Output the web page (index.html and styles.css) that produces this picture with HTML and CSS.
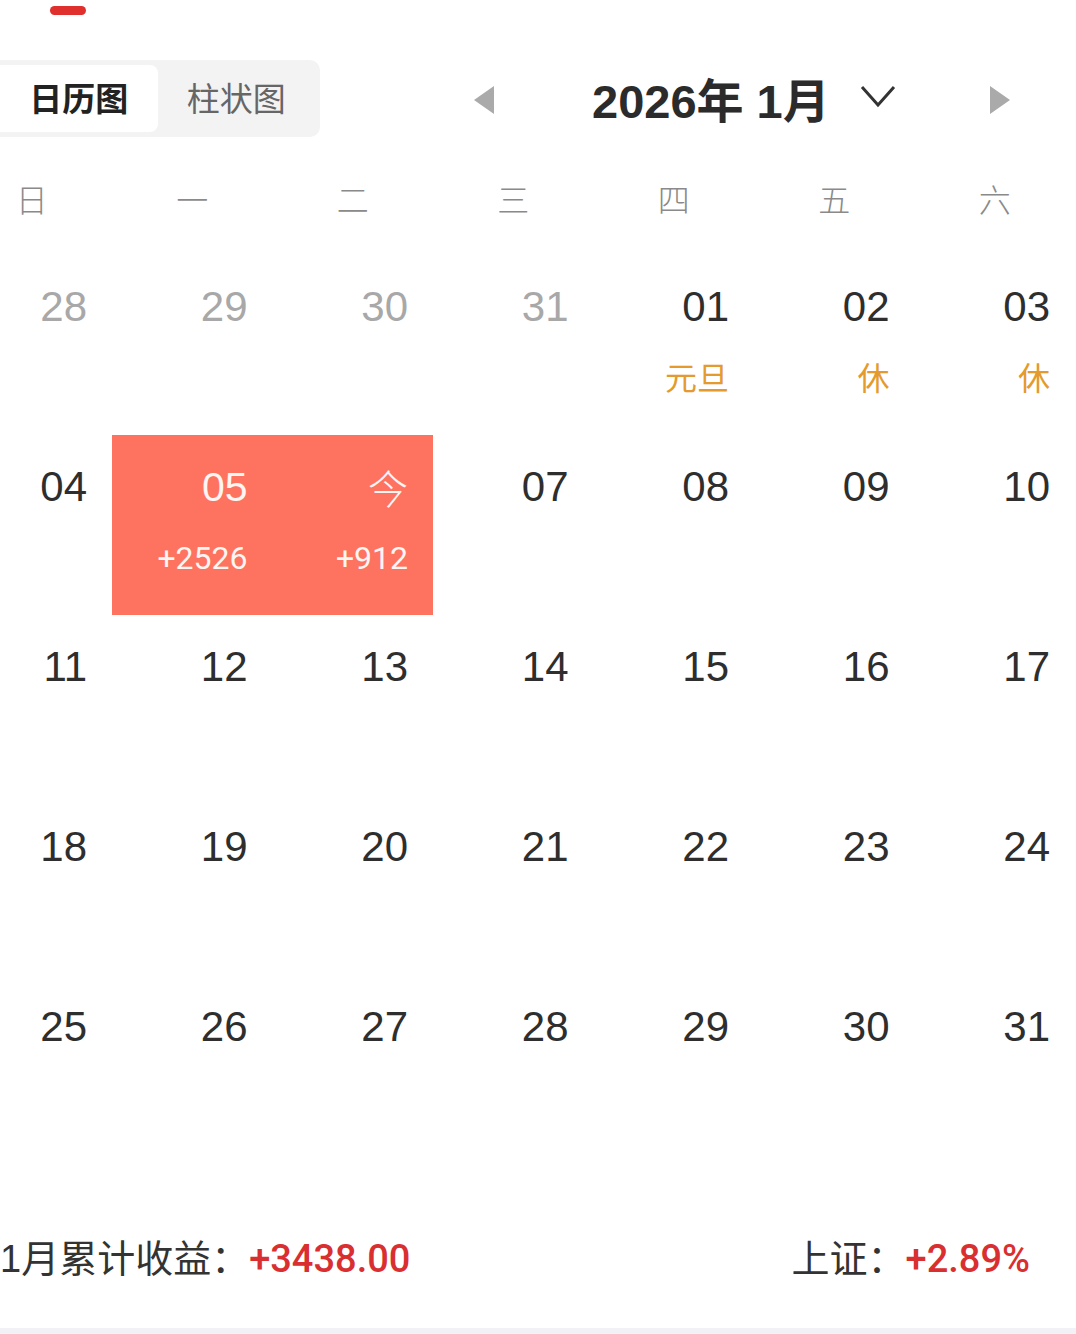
FILE: index.html
```html
<!DOCTYPE html>
<html lang="zh">
<head>
<meta charset="utf-8">
<title>日历图</title>
<link rel="stylesheet" href="styles.css">
</head>
<body>
<div class="page">
  <div class="topbar"><span class="indicator"></span></div>
  <div class="header">
    <div class="tabs">
      <div class="tab active">日历图</div>
      <div class="tab">柱状图</div>
    </div>
    <svg class="arrow arrow-left" width="20" height="28" viewBox="0 0 20 28"><polygon points="20,0 20,28 0,14" fill="#aaaaaa"/></svg>
    <div class="title">2026年 1月</div>
    <svg class="chevron" width="36" height="24" viewBox="0 0 36 24"><polyline points="2,3 18,21 34,3" fill="none" stroke="#333" stroke-width="3"/></svg>
    <svg class="arrow arrow-right" width="20" height="28" viewBox="0 0 20 28"><polygon points="0,0 0,28 20,14" fill="#aaaaaa"/></svg>
  </div>

  <div class="weekdays">
    <div>日</div><div>一</div><div>二</div><div>三</div><div>四</div><div>五</div><div>六</div>
  </div>

  <div class="grid">
    <div class="cell muted"><div class="num">28</div></div>
    <div class="cell muted"><div class="num">29</div></div>
    <div class="cell muted"><div class="num">30</div></div>
    <div class="cell muted"><div class="num">31</div></div>
    <div class="cell"><div class="num">01</div><div class="label holiday">元旦</div></div>
    <div class="cell"><div class="num">02</div><div class="label holiday">休</div></div>
    <div class="cell"><div class="num">03</div><div class="label holiday">休</div></div>

    <div class="cell"><div class="num">04</div></div>
    <div class="cell hot"><div class="num">05</div><div class="label gain">+2526</div></div>
    <div class="cell hot"><div class="num today">今</div><div class="label gain">+912</div></div>
    <div class="cell"><div class="num">07</div></div>
    <div class="cell"><div class="num">08</div></div>
    <div class="cell"><div class="num">09</div></div>
    <div class="cell"><div class="num">10</div></div>

    <div class="cell"><div class="num">11</div></div>
    <div class="cell"><div class="num">12</div></div>
    <div class="cell"><div class="num">13</div></div>
    <div class="cell"><div class="num">14</div></div>
    <div class="cell"><div class="num">15</div></div>
    <div class="cell"><div class="num">16</div></div>
    <div class="cell"><div class="num">17</div></div>

    <div class="cell"><div class="num">18</div></div>
    <div class="cell"><div class="num">19</div></div>
    <div class="cell"><div class="num">20</div></div>
    <div class="cell"><div class="num">21</div></div>
    <div class="cell"><div class="num">22</div></div>
    <div class="cell"><div class="num">23</div></div>
    <div class="cell"><div class="num">24</div></div>

    <div class="cell"><div class="num">25</div></div>
    <div class="cell"><div class="num">26</div></div>
    <div class="cell"><div class="num">27</div></div>
    <div class="cell"><div class="num">28</div></div>
    <div class="cell"><div class="num">29</div></div>
    <div class="cell"><div class="num">30</div></div>
    <div class="cell"><div class="num">31</div></div>
  </div>

  <div class="footer">
    <div class="stat">1月累计收益：<span class="red">+3438.00</span></div>
    <div class="stat">上证：<span class="red">+2.89%</span></div>
  </div>
  <div class="bottom-band"></div>
</div>
</body>
</html>
```

FILE: styles.css
```css
html, body {
  margin: 0;
  padding: 0;
  background: #ffffff;
}
body {
  width: 1076px;
  height: 1334px;
  overflow: hidden;
  font-family: "Liberation Sans", "Noto Sans CJK SC", sans-serif;
  color: #333333;
}
.page {
  width: 1076px;
}
.topbar {
  height: 60px;
  box-sizing: border-box;
  padding-top: 6px;
  padding-left: 50px;
}
.indicator {
  display: block;
  width: 36px;
  height: 9px;
  border-radius: 5px;
  background: #e0302e;
}
.header {
  height: 77px;
  display: flex;
  align-items: center;
}
.tabs {
  width: 320px;
  height: 77px;
  box-sizing: border-box;
  padding: 5px 5px 5px 0;
  background: #f3f3f3;
  border-radius: 0 10px 10px 0;
  display: flex;
}
.tab {
  width: 158px;
  height: 67px;
  display: flex;
  align-items: center;
  justify-content: center;
  font-size: 33px;
  line-height: 40px;
  padding-bottom: 4px;
  box-sizing: border-box;
  color: #666666;
  font-family: "Noto Sans CJK SC", sans-serif;
}
.tab.active {
  background: #ffffff;
  border-radius: 0 8px 8px 0;
  color: #222222;
  font-weight: 700;
}
.arrow-left {
  margin-left: 154px;
  margin-top: 2px;
}
.title {
  margin-left: 98px;
  font-size: 47px;
  font-weight: 700;
  color: #2b2b2b;
  line-height: 56px;
  margin-top: 6px;
  white-space: nowrap;
}
.chevron {
  margin-left: 30px;
  margin-top: -6px;
}
.arrow-right {
  margin-left: 94px;
  margin-top: 2px;
}
.weekdays {
  margin-left: -48.5px;
  width: 1123.5px;
  height: 118px;
  box-sizing: border-box;
  padding-top: 41px;
  display: grid;
  grid-template-columns: repeat(7, 1fr);
  font-family: "Noto Sans CJK SC", sans-serif;
  font-size: 32px;
  font-weight: 300;
  line-height: 40px;
  color: #8a8a8a;
  text-align: center;
}
.grid {
  margin-left: -48.5px;
  width: 1123.5px;
  display: grid;
  grid-template-columns: repeat(7, 1fr);
  grid-auto-rows: 180px;
}
.cell {
  box-sizing: border-box;
  padding: 27px 25px 0 0;
  text-align: right;
}
.num {
  font-size: 42px;
  line-height: 50px;
  color: #2e2e2e;
}
.muted .num {
  color: #a8a8a8;
}
.label {
  margin-top: 24px;
  line-height: 40px;
  font-size: 32px;
}
.holiday {
  font-family: "Noto Sans CJK SC", sans-serif;
  color: #e49a2c;
}
.hot {
  background: #fe7360;
}
.hot .num {
  color: #fff5f2;
  font-size: 41px;
}
.hot .today {
  font-family: "Noto Sans CJK SC", sans-serif;
  font-size: 40px;
  font-weight: 300;
}
.gain {
  margin-top: 26px;
  font-family: Roboto, "Liberation Sans", sans-serif;
  color: #fff5f2;
  font-size: 32px;
}
.footer {
  height: 173px;
  box-sizing: border-box;
  padding: 79px 46px 0 0;
  display: flex;
  justify-content: space-between;
  align-items: flex-start;
}
.stat {
  font-size: 38px;
  line-height: 50px;
  color: #333333;
  white-space: nowrap;
}
.red {
  font-family: Roboto, "Liberation Sans", sans-serif;
  font-weight: 500;
  font-size: 38px;
  color: #d92f30;
}
.bottom-band {
  height: 6px;
  background: #f2f2f6;
}
```
